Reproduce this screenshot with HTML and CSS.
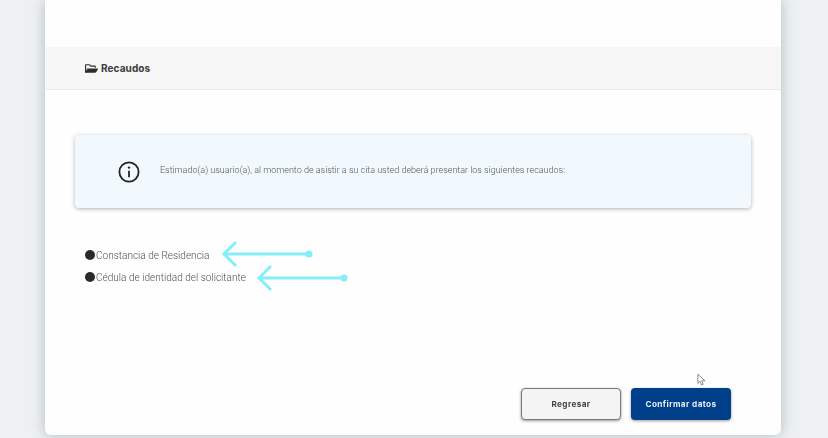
FILE: index.html
```html
<!DOCTYPE html>
<html>

<head>
  <meta name="viewport" content="width=device-width,initial-scale=1">
  <link rel="stylesheet" href="styles.css">
</head>

<body>
  <div class="card">
    <div class="section-head">
      <svg class="folder" viewBox="0 0 576 512">
        <path d="M152 224h328v-48c0-26.500-21.500-48-48-48H272l-64-64H48C21.500 64 0 85.500 0 112v288c0 26.500 21.500 48 48 48h20l1-176.400C86.200 242.300 118 224 152 224zM48 118c0-3.300 2.700-6 6-6h134l64 64h174c3.300 0 6 2.700 6 6v42H152c-17 0-32 9-41 23l-63 108z"/>
        <path d="M572.700 292.100L500.300 416.200A64 64 0 0 1 445 448H45c-18.500 0-30-20.100-20.700-36.100l72.400-124.100A64 64 0 0 1 152 256h400c18.500 0 30 20.100 20.700 36.100z"/>
      </svg>
      <span>Recaudos</span>
    </div>

    <div class="notice">
      <svg class="info" viewBox="0 0 24 24">
        <circle cx="12" cy="12" r="9.6"/>
        <path d="M12 10.800v6.400"/>
        <circle class="info-dot" cx="12" cy="7.600" r="1.200"/>
      </svg>
      <p>Estimado(a) usuario(a), al momento de asistir a su cita usted deberá presentar los siguientes recaudos:</p>
    </div>

    <ul class="reqs">
      <li class="req-one">
        <span class="bullet"></span>
        <span>Constancia de Residencia</span>
        <svg class="arrow" viewBox="0 0 92 28">
          <path d="M88 14H3M15 2L3 14l12 12"/>
          <circle cx="88" cy="14" r="3.600"/>
        </svg>
      </li>
      <li class="req-two">
        <span class="bullet"></span>
        <span>Cédula de identidad del solicitante</span>
        <svg class="arrow" viewBox="0 0 92 28">
          <path d="M88 14H3M15 2L3 14l12 12"/>
          <circle cx="88" cy="14" r="3.600"/>
        </svg>
      </li>
    </ul>

    <div class="actions">
      <button class="btn btn-back">Regresar</button>
      <button class="btn btn-confirm">Confirmar datos</button>
    </div>

    <!-- mouse pointer caught in the capture -->
    <svg class="cursor" viewBox="0 0 12 16">
      <path d="M1 1v11l2.700-2.500L5.500 14l2-.9-1.800-4.200H9.500z"/>
    </svg>
  </div>
</body>

</html>
```

FILE: styles.css
```css
html,
body {
  margin: 0;
  height: 438px;
  overflow: hidden;
}

body {
  background-color: #edf1f3;
  font-family: Roboto, "Liberation Sans", sans-serif;
}

/* White page card */

.card {
  position: relative;
  box-sizing: border-box;
  width: 736px;
  height: 435px;
  margin-left: 45px;
  padding-top: 47px;
  background-color: #fefefe;
  border-radius: 0 0 6px 6px;
  box-shadow: 0 0 14px rgba(90, 105, 115, 0.4);
  filter: blur(0.35px);
}

/* Grey section title */

.section-head {
  display: flex;
  align-items: center;
  gap: 3px;
  height: 43px;
  padding-left: 40px;
  background-color: #f6f6f6;
  border-bottom: 1px solid #ebebeb;
  box-sizing: border-box;
  color: #3a3a3a;
  font-family: Inter, Roboto, sans-serif;
  font-size: 10px;
  font-weight: 700;
  letter-spacing: 0.1px;
}

.folder {
  width: 13px;
  height: 13px;
  fill: #2b2b2b;
}

/* Blue notice box */

.notice {
  display: flex;
  align-items: center;
  gap: 19px;
  height: 73px;
  margin: 45px 30px 0;
  padding-left: 42px;
  background-color: #f1f9fe;
  border-radius: 4px;
  box-shadow: 0 1px 4px rgba(0, 0, 0, 0.3);
}

.notice p {
  margin: 0 0 3px;
  color: #555;
  font-size: 9px;
  font-weight: 300;
}

.info {
  width: 24px;
  height: 24px;
  fill: none;
  stroke: #222;
  stroke-width: 1.8;
}

.info-dot {
  fill: #222;
  stroke: none;
}

/* List of documents */

.reqs {
  margin: 36px 0 0;
  padding: 0 0 0 40px;
  list-style: none;
  color: #505050;
  font-size: 10.050px;
  font-weight: 300;
}

.reqs li {
  display: flex;
  align-items: center;
  gap: 1px;
  height: 22px;
}

.bullet {
  width: 10px;
  height: 10px;
  background-color: #2a2a2a;
  border-radius: 50%;
}

.arrow {
  width: 92px;
  height: 28px;
  margin-left: 9px;
  fill: #86eef9;
  stroke: none;
}

.req-one .arrow {
  margin-top: -2px;
  margin-left: 11px;
}

.req-two .arrow {
  margin-top: 2px;
}

.arrow path {
  fill: none;
  stroke: #86eef9;
  stroke-width: 3;
}

/* Bottom buttons */

.actions {
  position: absolute;
  right: 50px;
  bottom: 15px;
  display: flex;
  gap: 10px;
}

.btn {
  width: 100px;
  height: 32px;
  padding: 0;
  border-radius: 4px;
  font-family: Inter, Roboto, sans-serif;
  font-size: 8.200px;
  font-weight: 700;
  letter-spacing: 0.4px;
  box-shadow: 0 1px 3px rgba(0, 0, 0, 0.4);
}

.btn-back {
  background-color: #f4f4f4;
  border: 1px solid #777;
  color: #444;
}

.btn-confirm {
  background-color: #00408a;
  border: none;
  color: #e8eef6;
}

.cursor {
  position: absolute;
  left: 652px;
  top: 373px;
  width: 10px;
  height: 14px;
  fill: #fff;
  stroke: #666;
  stroke-width: 0.9;
}
```
